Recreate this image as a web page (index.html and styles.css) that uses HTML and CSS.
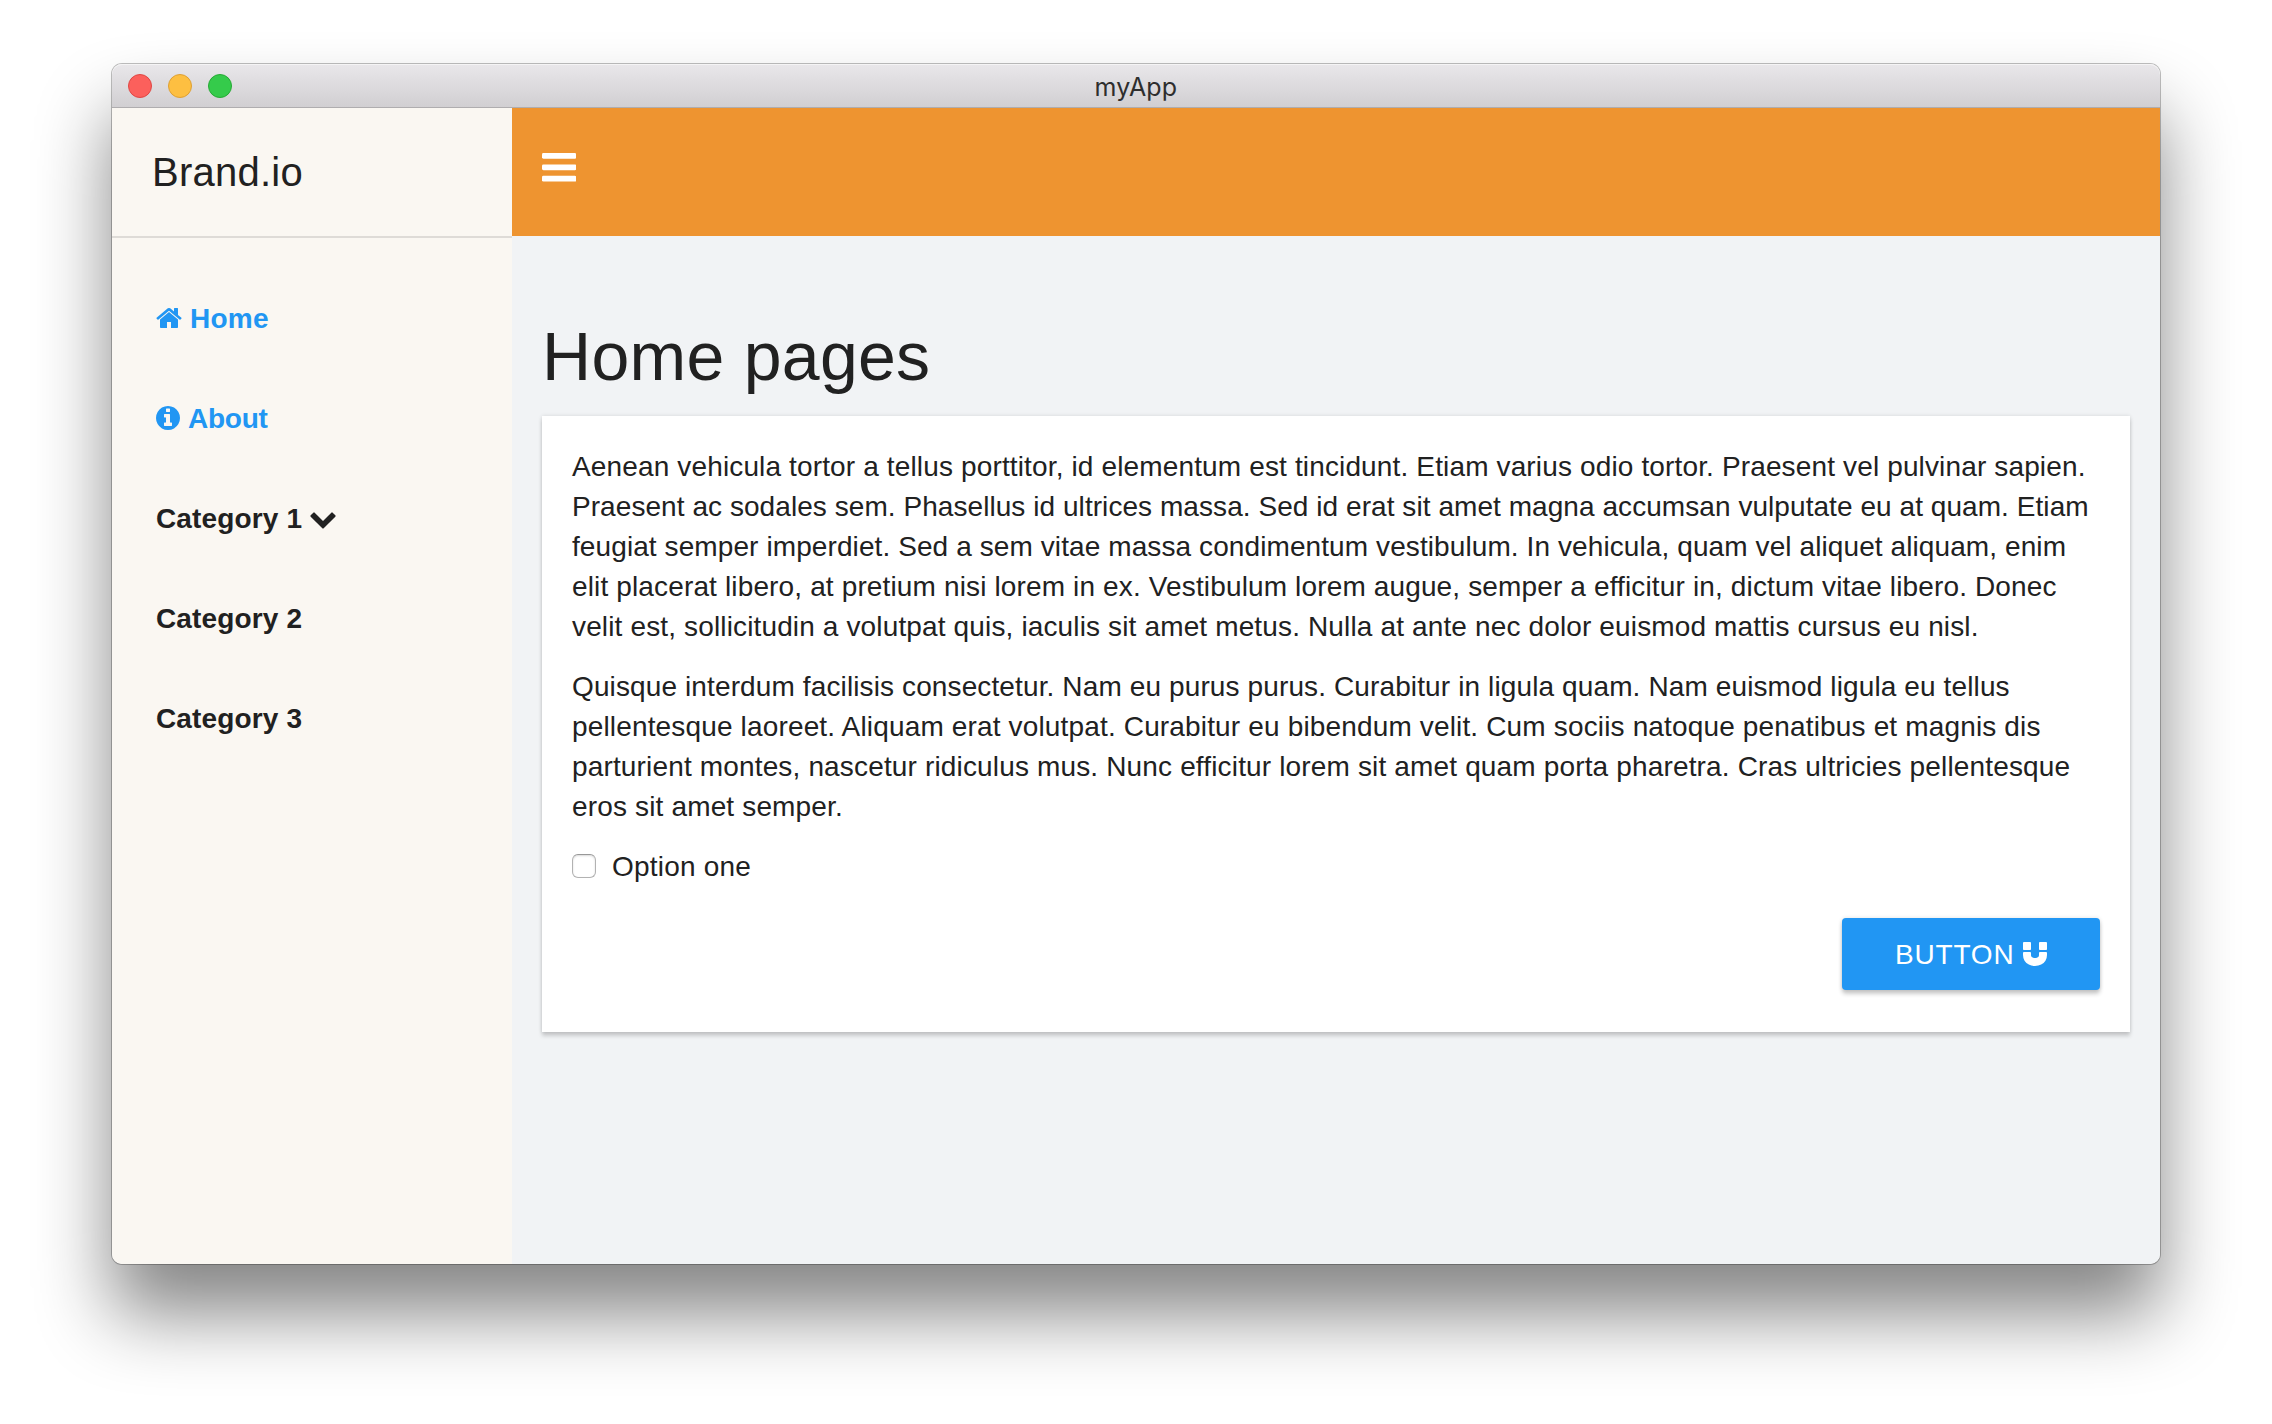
FILE: index.html
```html
<!DOCTYPE html>
<html lang="en">
<head>
<meta charset="utf-8">
<title>myApp</title>
<link rel="stylesheet" href="styles.css">
</head>
<body>
<div class="window">
  <header class="titlebar">
    <div class="lights"><span class="light close"></span><span class="light minimize"></span><span class="light zoom"></span></div>
    <span class="window-title">myApp</span>
  </header>
  <div class="app">
    <aside class="sidebar">
      <div class="brand"><span class="brand-name">Brand.io</span></div>
      <nav class="menu">
        <a class="item link home"><svg class="icon" viewBox="0 0 1792 1792"><path d="M1472 992v480q0 26-19 45t-45 19h-384v-384h-256v384h-384q-26 0-45-19t-19-45v-480q0-1 .5-3t.5-3l575-474 575 474q1 2 1 6zm223-69l-62 74q-8 9-21 11h-3q-13 0-21-7l-692-577-692 577q-12 8-24 7-13-2-21-11l-62-74q-8-10-7-23.5t11-21.5l719-599q32-26 76-26t76 26l244 204v-195q0-14 9-23t23-9h192q14 0 23 9t9 23v408l219 182q10 8 11 21.5t-7 23.5z"/></svg><span class="label">Home</span></a>
        <a class="item link about"><svg class="icon" viewBox="0 0 1792 1792"><path d="M1152 1376v-160q0-14-9-23t-23-9h-96v-512q0-14-9-23t-23-9h-320q-14 0-23 9t-9 23v160q0 14 9 23t23 9h96v320h-96q-14 0-23 9t-9 23v160q0 14 9 23t23 9h448q14 0 23-9t9-23zm-128-896v-160q0-14-9-23t-23-9h-192q-14 0-23 9t-9 23v160q0 14 9 23t23 9h192q14 0 23-9t9-23zm640 416q0 209-103 385.5t-279.5 279.5-385.5 103-385.5-103-279.5-279.5-103-385.5 103-385.5 279.5-279.5 385.5-103 385.5 103 279.5 279.5 103 385.5z"/></svg><span class="label">About</span></a>
        <a class="item"><span class="label">Category 1</span><svg class="icon chevron" viewBox="0 0 1792 1792"><path d="M1683 808l-742 741q-19 19-45 19t-45-19l-742-741q-19-19-19-45.5t19-45.5l166-165q19-19 45-19t45 19l531 531 531-531q19-19 45-19t45 19l166 165q19 19 19 45.5t-19 45.5z"/></svg></a>
        <a class="item"><span class="label">Category 2</span></a>
        <a class="item"><span class="label">Category 3</span></a>
      </nav>
    </aside>
    <div class="main">
      <div class="appbar">
        <svg class="burger" viewBox="0 0 34.3 28.6"><rect width="34.3" height="5.7" rx="1.4"/><rect y="11.43" width="34.3" height="5.7" rx="1.4"/><rect y="22.86" width="34.3" height="5.7" rx="1.4"/></svg>
      </div>
      <main class="content">
        <h1>Home pages</h1>
        <section class="card">
          <p>Aenean vehicula tortor a tellus porttitor, id elementum est tincidunt. Etiam varius odio tortor. Praesent vel pulvinar sapien.<br><span class="tightest">Praesent ac sodales sem. Phasellus id ultrices massa. Sed id erat sit amet magna accumsan vulputate eu at quam. Etiam</span><br><span class="tight">feugiat semper imperdiet. Sed a sem vitae massa condimentum vestibulum. In vehicula, quam vel aliquet aliquam, enim</span><br>elit placerat libero, at pretium nisi lorem in ex. Vestibulum lorem augue, semper a efficitur in, dictum vitae libero. Donec<br>velit est, sollicitudin a volutpat quis, iaculis sit amet metus. Nulla at ante nec dolor euismod mattis cursus eu nisl.</p>
          <p class="loose"><span class="snug">Quisque interdum facilisis consectetur. Nam eu purus purus. Curabitur in ligula quam. Nam euismod ligula eu tellus</span><br>pellentesque laoreet. Aliquam erat volutpat. Curabitur eu bibendum velit. Cum sociis natoque penatibus et magnis dis<br>parturient montes, nascetur ridiculus mus. Nunc efficitur lorem sit amet quam porta pharetra. Cras ultricies pellentesque<br>eros sit amet semper.</p>
          <label class="option"><input class="checkbox" type="checkbox"><span class="option-text">Option one</span></label>
          <button class="button" type="button"><span class="button-text">BUTTON</span><svg class="icon" viewBox="0 0 1792 1792"><path d="M1664 832v128q0 201-98.5 362t-274 251.5-395.5 90.5-395.5-90.5-274-251.5-98.5-362v-128q0-26 19-45t45-19h384q26 0 45 19t19 45v128q0 52 23.5 90t53.5 57 71 30 64 13 44 2 44-2 64-13 71-30 53.5-57 23.5-90v-128q0-26 19-45t45-19h384q26 0 45 19t19 45zm-1024-640v384q0 26-19 45t-45 19h-384q-26 0-45-19t-19-45v-384q0-26 19-45t45-19h384q26 0 45 19t19 45zm1024 0v384q0 26-19 45t-45 19h-384q-26 0-45-19t-19-45v-384q0-26 19-45t45-19h384q26 0 45 19t19 45z"/></svg></button>
        </section>
      </main>
    </div>
  </div>
</div>
</body>
</html>
```
FILE: styles.css
```css
* { box-sizing: border-box; }

body {
  margin: 0;
  height: 1424px;
  padding: 64px 112px 0;
  overflow: hidden;
  background: #fff;
  color: #212121;
  font: 28px/40px "Liberation Sans", Arial, sans-serif;
}

.window {
  display: flex;
  flex-direction: column;
  width: 2048px;
  height: 1200px;
  border-radius: 10px;
  box-shadow: 0 0 0 1px rgba(0, 0, 0, .25), 0 50px 74px rgba(0, 0, 0, .48);
}

.titlebar {
  display: grid;
  grid-template-columns: 1fr auto 1fr;
  align-items: center;
  height: 44px;
  padding: 0 16px;
  border-bottom: 1px solid #afadaf;
  border-radius: 10px 10px 0 0;
  background: linear-gradient(#e9e7ea, #d1cfd2);
  box-shadow: inset 0 1px #f5f4f5;
}

.lights { display: flex; gap: 16px; }
.light { width: 24px; height: 24px; border: 1px solid; border-radius: 50%; }
.close { background: #fc605c; border-color: #df4744; }
.minimize { background: #fdbf41; border-color: #dea034; }
.zoom { background: #35cb4b; border-color: #26aa35; }

.window-title {
  padding-top: 3px;
  color: #2e2e2e;
  font: 25px/40px Inter, "Liberation Sans", sans-serif;
  letter-spacing: .2px;
}

.app { display: flex; flex: 1; }

.sidebar {
  width: 400px;
  border-radius: 0 0 0 10px;
  background: #faf7f2;
}

.brand {
  height: 130px;
  padding: 42px 0 0 40px;
  border-bottom: 2px solid #dedbd7;
  font-size: 40px;
  line-height: 44px;
  letter-spacing: .25px;
}

.menu { padding: 30px 44px; }

.item {
  display: flex;
  align-items: center;
  height: 100px;
  font-weight: bold;
  letter-spacing: .14px;
}

.label { padding-top: 2px; }
.link { color: #2196f3; }
.icon { flex: none; width: 28px; height: 28px; fill: currentColor; }
.home .icon { margin: 0 7px 0 -1px; }
.home { letter-spacing: .25px; }
.about .icon { margin: 0 6px 0 -2px; }
.about { letter-spacing: -.25px; }
.chevron { margin-left: 7px; }

.main { display: flex; flex: 1; flex-direction: column; }

.appbar {
  height: 128px;
  padding: 45px 30px;
  background: #ee9430;
}

.burger { display: block; width: 34.3px; height: 28.6px; fill: #fff; }

.content {
  flex: 1;
  padding: 80px 30px 0;
  border-radius: 0 0 10px;
  background: #f1f3f5;
}

h1 {
  margin: 0 0 20px;
  font-size: 68px;
  font-weight: 400;
  line-height: 80px;
  letter-spacing: .28px;
}

.card {
  display: flex;
  flex-direction: column;
  height: 616px;
  padding: 31px 30px 0;
  background: #fff;
  box-shadow: 0 4px 4px rgba(0, 0, 0, .16), 0 0 4px rgba(0, 0, 0, .12);
}

p { margin: 0 0 20px; white-space: nowrap; letter-spacing: .142px; }
.tightest { letter-spacing: .06px; }
.tight { letter-spacing: .095px; }
.snug { letter-spacing: .12px; }
.loose { letter-spacing: .155px; }

.option { display: flex; align-items: center; gap: 16px; height: 40px; letter-spacing: .2px; }

.checkbox {
  width: 24px;
  height: 24px;
  margin: -2px 0 0;
  border: 1px solid #b2b2b2;
  border-top-color: #989898;
  border-radius: 6px;
  background: #fff;
  box-shadow: inset 0 1px 2px rgba(0, 0, 0, .15);
  appearance: none;
}

.button {
  display: flex;
  align-items: center;
  align-self: flex-end;
  gap: 7px;
  width: 258px;
  height: 72px;
  margin-top: 31px;
  padding: 0 0 0 53px;
  border: 0;
  border-radius: 4px;
  background: #2196f3;
  box-shadow: 0 4px 4px rgba(0, 0, 0, .2), 0 0 4px rgba(0, 0, 0, .12);
  color: #fff;
  font: inherit;
  letter-spacing: .8px;
}
.button-text { padding-top: 1px; }
```
